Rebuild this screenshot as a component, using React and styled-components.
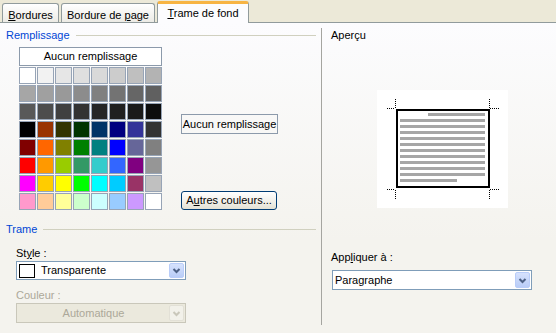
import React from 'react'
import styled, { createGlobalStyle } from 'styled-components'

const palette = [
  ['#ffffff', '#f2f2f2', '#e6e6e6', '#dfdfdf', '#d9d9d9', '#cccccc', '#bfbfbf', '#b3b3b3'],
  ['#a6a6a6', '#a0a0a0', '#999999', '#8c8c8c', '#808080', '#737373', '#666666', '#606060'],
  ['#595959', '#4d4d4d', '#404040', '#333333', '#262626', '#202020', '#1a1a1a', '#0d0d0d'],
  ['#000000', '#993300', '#333300', '#003300', '#003366', '#000080', '#333399', '#333333'],
  ['#800000', '#ff6600', '#808000', '#008000', '#008080', '#0000ff', '#666699', '#808080'],
  ['#ff0000', '#ff9900', '#99cc00', '#339966', '#33cccc', '#3366ff', '#800080', '#969696'],
  ['#ff00ff', '#ffcc00', '#ffff00', '#00ff00', '#00ffff', '#00ccff', '#993366', '#c0c0c0'],
  ['#ff99cc', '#ffcc99', '#ffff99', '#ccffcc', '#ccffff', '#99ccff', '#cc99ff', '#ffffff'],
]

function Chevron({ disabled }) {
  return (
    <svg width="9" height="7" viewBox="0 0 9 7">
      <path d="M1.5 2 L4.5 5 L7.5 2" fill="none" stroke={disabled ? '#c9c7ba' : '#4d6185'} strokeWidth="2" />
    </svg>
  )
}

function PreviewPage() {
  const lines = []
  for (let i = 0; i < 12; i++) {
    const x = i === 0 ? 51 : 23
    const w = i === 11 ? 80 - 23 : 108 - x
    lines.push(<rect key={i} x={x} y={23 + i * 6} width={w} height="3" fill="#a6a6a6" />)
  }
  return (
    <svg width="131" height="118" viewBox="0 0 131 118" shapeRendering="crispEdges">
      <g stroke="#000" strokeDasharray="1 1" strokeWidth="1">
        <line x1="10" y1="18.5" x2="18" y2="18.5" />
        <line x1="18.5" y1="9" x2="18.5" y2="18" />
        <line x1="113" y1="18.5" x2="122" y2="18.5" />
        <line x1="112.5" y1="9" x2="112.5" y2="18" />
        <line x1="10" y1="99.5" x2="18" y2="99.5" />
        <line x1="18.5" y1="100" x2="18.5" y2="109" />
        <line x1="113" y1="99.5" x2="122" y2="99.5" />
        <line x1="112.5" y1="100" x2="112.5" y2="109" />
      </g>
      <rect x="20" y="20" width="92" height="77" fill="#fff" stroke="#000" strokeWidth="2" />
      {lines}
    </svg>
  )
}

export default function App() {
  return (
    <Window>
      <GlobalStyle />
      <TabStrip>
        <Tab $w={57}><Key>B</Key>ordures</Tab>
        <Tab $w={94}>Bordure de <Key>p</Key>age</Tab>
        <Tab $w={92} $active><Key>T</Key>rame de fond</Tab>
      </TabStrip>
      <Panel>
        <LeftColumn>
          <GroupHeader>Remplissage</GroupHeader>
          <FillRow>
            <PaletteBlock>
              <NoFillBox>Aucun remplissage</NoFillBox>
              <Grid>
                {palette.flat().map((c, i) => (
                  <Cell key={i} $color={c} />
                ))}
              </Grid>
            </PaletteBlock>
            <ButtonColumn>
              <FlatButton>Aucun remplissage</FlatButton>
              <XpButton>A<Key>u</Key>tres couleurs...</XpButton>
            </ButtonColumn>
          </FillRow>

          <TrameHeader>Trame</TrameHeader>
          <FieldLabel $top={11}>St<Key>y</Key>le :</FieldLabel>
          <Select $w={170} $h={19}>
            <Swatch />
            <SelectText>Transparente</SelectText>
            <ArrowBtn><Chevron /></ArrowBtn>
          </Select>
          <FieldLabel $top={9} $disabled>Couleur :</FieldLabel>
          <Select $w={170} $h={20} $disabled>
            <SelectText $center $disabled>Automatique</SelectText>
            <ArrowBtn $disabled><Chevron disabled /></ArrowBtn>
          </Select>
        </LeftColumn>

        <Separator />

        <RightColumn>
          <PlainLabel>Aperçu</PlainLabel>
          <PreviewBox>
            <PreviewPage />
          </PreviewBox>
          <PlainLabel $top={43}>App<Key>l</Key>iquer à :</PlainLabel>
          <ApplySelect $w={200} $h={20}>
            <SelectText $pad={1}>Paragraphe</SelectText>
            <ArrowBtn><Chevron /></ArrowBtn>
          </ApplySelect>
        </RightColumn>
      </Panel>
    </Window>
  )
}

const GlobalStyle = createGlobalStyle`
  html, body { margin:0; padding:0; }
  body {
    background:#ece9d8;
    font-family:"Liberation Sans", Arial, sans-serif;
    font-size:11px;
    color:#000;
  }
`

const Window = styled.div`
  width:556px;
  height:333px;
  overflow:hidden;
  background:#ece9d8;
  line-height:13px;
`

const TabStrip = styled.div`
  height:22px;
  display:flex;
  align-items:flex-end;
  border-bottom:1px solid #919b9c;
`

const Tab = styled.div`
  box-sizing:border-box;
  width:${p => p.$w}px;
  margin-left:2px;
  height:${p => (p.$active ? 22 : 19)}px;
  margin-bottom:${p => (p.$active ? -1 : 0)}px;
  padding-top:${p => (p.$active ? 3 : 5)}px;
  text-align:center;
  border:1px solid #919b9c;
  border-bottom:none;
  border-top:${p => (p.$active ? '3px solid #f7b443' : '1px solid #919b9c')};
  border-radius:3px 3px 0 0;
  background:${p => (p.$active ? '#fcfcfe' : 'linear-gradient(#ffffff, #ecebe5)')};
  position:relative;
  z-index:${p => (p.$active ? 1 : 0)};
`

const Key = styled.span`
  text-decoration:underline;
`

const Panel = styled.div`
  height:310px;
  display:flex;
  background:linear-gradient(#fcfcfe, #f4f3ee 70%);
`

const LeftColumn = styled.div`
  box-sizing:border-box;
  width:321px;
  padding:6px 5px 0 6px;
  display:flex;
  flex-direction:column;
  align-items:flex-start;
`

const GroupHeader = styled.div`
  align-self:stretch;
  display:flex;
  align-items:center;
  color:#0046d5;
  height:13px;
  &::after {
    content:'';
    flex:1;
    height:1px;
    margin-left:6px;
    background:#d0d0bf;
  }
`

const TrameHeader = styled(GroupHeader)`
  margin-top:13px;
`

const FillRow = styled.div`
  display:flex;
  margin-top:5px;
  margin-left:13px;
`

const PaletteBlock = styled.div`
  display:flex;
  flex-direction:column;
  gap:1px;
`

const NoFillBox = styled.div`
  box-sizing:border-box;
  width:143px;
  height:19px;
  border:1px solid #8c9aab;
  background:#fff;
  text-align:center;
  line-height:17px;
`

const Grid = styled.div`
  display:grid;
  grid-template-columns:repeat(8, 17px);
  grid-auto-rows:17px;
  gap:1px;
`

const Cell = styled.div`
  box-sizing:border-box;
  border:1px solid #97a4b6;
  background:${p => p.$color};
`

const ButtonColumn = styled.div`
  display:flex;
  flex-direction:column;
  margin-left:19px;
  padding-top:67px;
  gap:57px;
`

const FlatButton = styled.div`
  box-sizing:border-box;
  width:97px;
  height:20px;
  border:1px solid #8c9aab;
  text-align:center;
  line-height:18px;
`

const XpButton = styled.div`
  box-sizing:border-box;
  width:96px;
  height:19px;
  border:1px solid #003c74;
  border-radius:3px;
  background:linear-gradient(#ffffff, #f0efe8 60%, #e3e1d4);
  text-align:center;
  line-height:17px;
`

const FieldLabel = styled.div`
  margin-top:${p => p.$top}px;
  margin-left:10px;
  height:13px;
  margin-bottom:1px;
  color:${p => (p.$disabled ? '#aca899' : '#000')};
`

const Select = styled.div`
  box-sizing:border-box;
  width:${p => p.$w}px;
  height:${p => p.$h}px;
  margin-left:10px;
  padding:1px;
  display:flex;
  align-items:center;
  border:1px solid ${p => (p.$disabled ? '#c9c7ba' : '#7f9db9')};
  background:${p => (p.$disabled ? '#ebe9dd' : '#fff')};
`

const ApplySelect = styled(Select)`
  margin-left:1px;
  margin-top:6px;
`

const Swatch = styled.div`
  box-sizing:border-box;
  width:16px;
  height:14px;
  margin-left:1px;
  border:1px solid #000;
  background:#fff;
`

const SelectText = styled.span`
  flex:1;
  padding-left:${p => (p.$center ? 0 : p.$pad ?? 6)}px;
  text-align:${p => (p.$center ? 'center' : 'left')};
  color:${p => (p.$disabled ? '#aca899' : '#000')};
`

const ArrowBtn = styled.div`
  box-sizing:border-box;
  width:15px;
  align-self:stretch;
  display:flex;
  align-items:center;
  justify-content:center;
  border:1px solid ${p => (p.$disabled ? '#e2e0d6' : '#b9cdf9')};
  border-radius:2px;
  background:${p => (p.$disabled ? '#f2f1ea' : 'linear-gradient(#d6e2fd, #b9cdf7)')};
`

const Separator = styled.div`
  width:1px;
  margin:5px 0 8px;
  background:#a5a5a0;
`

const RightColumn = styled.div`
  flex:1;
  padding:6px 0 0 9px;
  display:flex;
  flex-direction:column;
  align-items:flex-start;
`

const PlainLabel = styled.div`
  height:13px;
  margin-top:${p => p.$top ?? 0}px;
`

const PreviewBox = styled.div`
  margin-top:48px;
  margin-left:46px;
  width:131px;
  height:118px;
  background:#fff;
  display:flex;
`
